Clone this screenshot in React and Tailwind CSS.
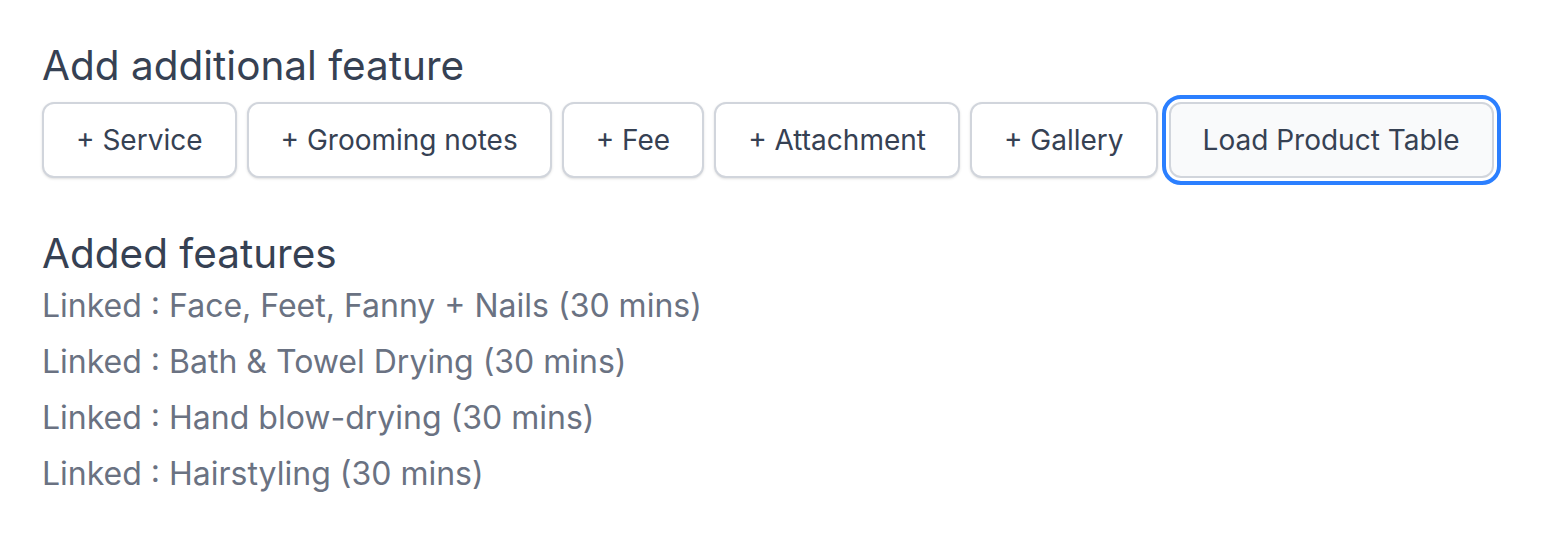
const features = ['+ Service', '+ Grooming notes', '+ Fee', '+ Attachment', '+ Gallery']

const linked = [
  'Face, Feet, Fanny + Nails (30 mins)',
  'Bath & Towel Drying (30 mins)',
  'Hand blow-drying (30 mins)',
  'Hairstyling (30 mins)',
]

export default function App() {
  return (
    <div className="min-h-[560px] bg-white px-[42px] pt-[38px] font-['Inter',sans-serif] text-gray-700">
      <h2 className="text-[40.5px] leading-[56px] font-normal">Add additional feature</h2>
      <div className="mt-[8px] flex items-center gap-[10px]">
        {features.map((f) => (
          <button
            key={f}
            className="h-[76px] rounded-[12px] border-2 border-gray-300 bg-white px-[32px] text-[28px] leading-[40px] text-gray-700 shadow-sm"
          >
            {f}
          </button>
        ))}
        <button className="ml-[1px] h-[76px] rounded-[12px] border-2 border-gray-300 bg-gray-50 px-[32px] text-[28px] leading-[40px] text-gray-700 outline-4 outline-offset-[3px] outline-blue-500 outline">
          Load Product Table
        </button>
      </div>

      <h2 className="mt-[52px] text-[40.5px] leading-[48px] font-normal">Added features</h2>
      <ul className="text-[32px] leading-[56px] text-gray-500">
        {linked.map((l) => (
          <li key={l}>Linked : {l}</li>
        ))}
      </ul>
    </div>
  )
}
